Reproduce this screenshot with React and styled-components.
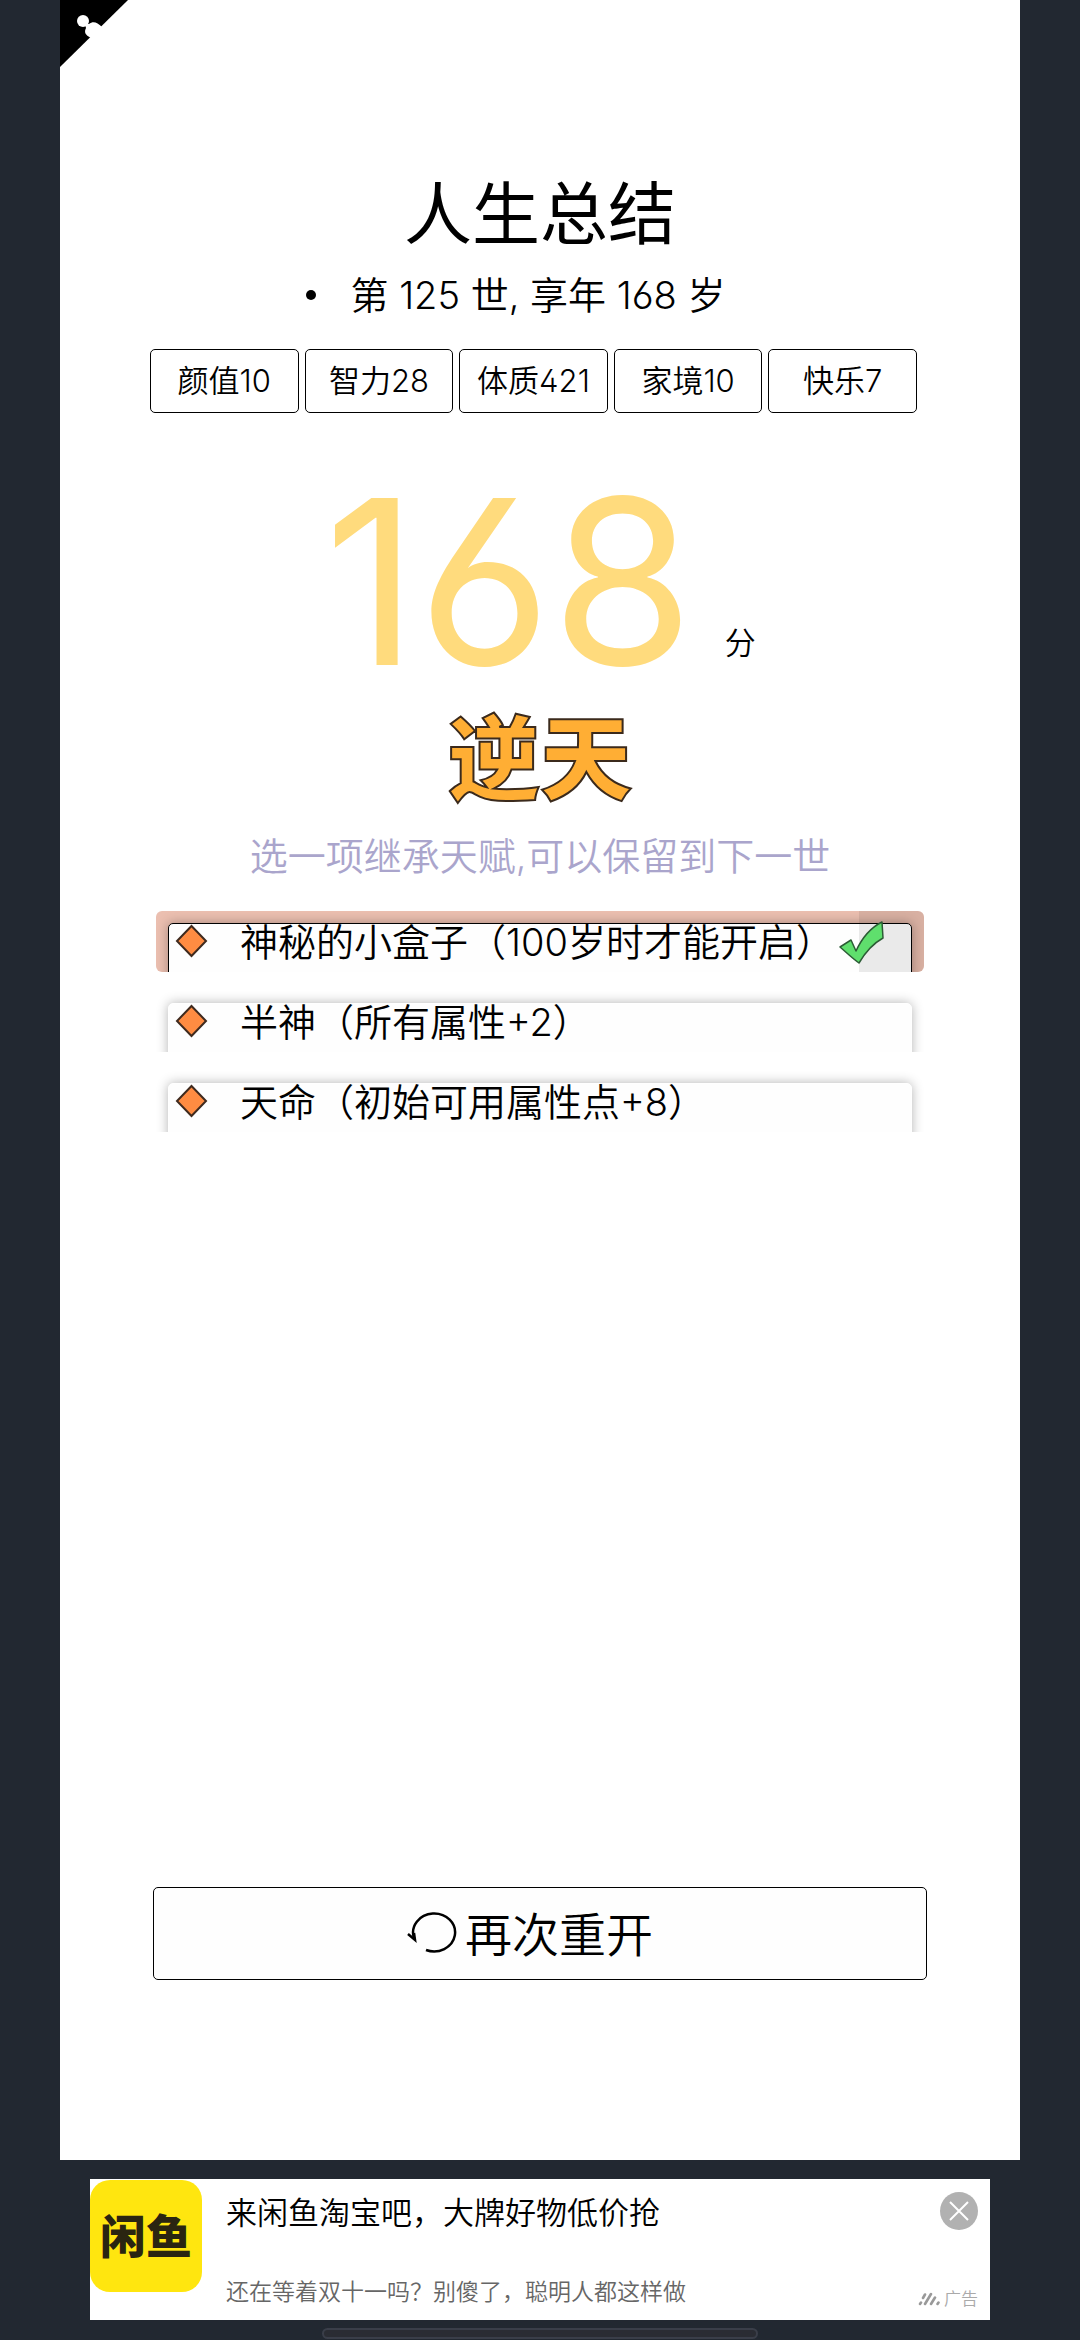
import React, { useState } from 'react';
import styled, { createGlobalStyle } from 'styled-components';

const GlobalStyle = createGlobalStyle`
  * {
    box-sizing: border-box;
  }
  body {
    margin: 0;
    background: #222831;
    font-family: Inter, 'Noto Sans CJK SC', sans-serif;
    font-feature-settings: 'cv03', 'ss01';
    font-weight: 350;
    color: #000;
  }
`;

const Page = styled.div`
  display: flex;
  flex-direction: column;
  align-items: center;
  min-height: 100vh;
  padding: 0 60px 1px;
`;

const Panel = styled.main`
  position: relative;
  flex: 1;
  width: 100%;
  display: flex;
  flex-direction: column;
  padding: 166px 90px 180px;
  background: #fff;
`;

const Corner = styled.a`
  position: absolute;
  top: 0;
  left: 0;
  line-height: 0;
`;

const Title = styled.h1`
  margin: 0;
  font-size: 68px;
  line-height: 96px;
  font-weight: 400;
  text-align: center;
`;

const Summary = styled.ul`
  align-self: center;
  margin: 6px 0 0;
  padding: 0;
  list-style: none;
  font-size: 38px;
  line-height: 54px;
`;

const SummaryItem = styled.li`
  display: flex;
  align-items: center;
  gap: 34px;
  margin-right: 48px;
  &::before {
    content: '';
    width: 10px;
    height: 10px;
    border-radius: 50%;
    background: #000;
  }
`;

const Stats = styled.div`
  display: flex;
  gap: 6px;
  margin: 27px 13px 0 0;
`;

const Stat = styled.div`
  flex: 1;
  height: 64px;
  border: 1px solid #000;
  border-radius: 5px;
  font-size: 31px;
  line-height: 62px;
  text-align: center;
`;

const Score = styled.div`
  display: flex;
  justify-content: center;
  align-items: flex-end;
  gap: 31px;
  margin-top: 63px;
`;

const Points = styled.strong`
  font-size: 230px;
  line-height: 210px;
  font-weight: 400;
  color: #ffdb7d;
`;

const Unit = styled.span`
  margin-bottom: 20px;
  font-size: 31px;
  line-height: 46px;
`;

const Grade = styled.p`
  margin: 24px 0 0;
  font-size: 92px;
  line-height: 100px;
  font-weight: 900;
  text-align: center;
  color: #ffae34;
  -webkit-text-stroke: 2px #3b2a1c;
`;

const Talents = styled.fieldset`
  display: flex;
  flex-direction: column;
  gap: 19px;
  margin: 18px 6px 0;
  padding: 0;
  border: none;
`;

const Hint = styled.legend`
  width: 100%;
  margin: 44px 0 27px;
  padding: 0;
  font-size: 38px;
  line-height: 56px;
  text-align: center;
  white-space: nowrap;
  color: #aaa5cc;
`;

const Talent = styled.label`
  position: relative;
  height: 61px;
  padding: 12px 12px 0;
  border-radius: ${({ $picked }) => ($picked ? '6px' : '0')};
  background: ${({ $picked }) => ($picked ? '#ebbfb0' : '#fff')};
  overflow: hidden;
  cursor: pointer;
`;

const Radio = styled.input`
  position: absolute;
  opacity: 0;
  margin: 0;
`;

const Card = styled.span`
  display: flex;
  align-items: flex-start;
  gap: 32px;
  height: 60px;
  padding: 0 6px;
  border: 1px solid ${({ $picked }) => ($picked ? '#000' : '#fff')};
  border-radius: 5px;
  background: #fefefe;
  box-shadow: 0 0 12px rgba(0, 0, 0, 0.3);
  font-size: 38px;
  line-height: 36px;
  white-space: nowrap;
`;

const Picked = styled.span`
  position: absolute;
  top: 0;
  right: 0;
  width: 65px;
  height: 100%;
  background: rgba(0, 0, 0, 0.08);
  svg {
    position: absolute;
    top: 9px;
    right: 40px;
  }
`;

const Restart = styled.button`
  display: flex;
  justify-content: center;
  align-items: center;
  gap: 8px;
  height: 93px;
  margin: auto 3px 0;
  padding: 0 20px 4px 0;
  border: 1px solid #000;
  border-radius: 5px;
  background: #fefefe;
  font: inherit;
  font-size: 47px;
  color: #000;
  cursor: pointer;
`;

const Ad = styled.aside`
  display: flex;
  align-self: stretch;
  height: 141px;
  margin: 19px 30px 8px;
  background: #fff;
`;

const AdLogo = styled.div`
  width: 112px;
  height: 112px;
  margin-top: 1px;
  border-radius: 20px;
  background: #ffe60f;
  font-size: 46px;
  line-height: 112px;
  font-weight: 900;
  text-align: center;
  color: #2a2511;
`;

const AdText = styled.div`
  flex: 1;
  display: flex;
  flex-direction: column;
  justify-content: space-between;
  padding: 11px 0 10px 24px;
`;

const AdTitle = styled.div`
  font-size: 31px;
  line-height: 46px;
`;

const AdBody = styled.div`
  font-size: 23px;
  line-height: 36px;
  color: #666;
`;

const AdSide = styled.div`
  display: flex;
  flex-direction: column;
  justify-content: space-between;
  align-items: flex-end;
  padding: 13px 12px 9px 0;
`;

const Close = styled.button`
  width: 38px;
  height: 38px;
  padding: 0;
  border: none;
  border-radius: 50%;
  background: #b1b1b1;
  line-height: 0;
  cursor: pointer;
`;

const AdTag = styled.div`
  display: flex;
  align-items: center;
  gap: 4px;
  font-size: 17px;
  line-height: 24px;
  color: #aaa;
`;

const HomeBar = styled.div`
  width: 436px;
  height: 11px;
  border: 2px solid #3a3e49;
  border-radius: 6px;
  background: #2a2c33;
`;

const CornerIcon = () => (
  <svg width="68" height="68" viewBox="0 0 68 68">
    <path d="M0 0H68L0 67Z" fill="#000" />
    <circle cx="23" cy="21" r="6" fill="#fff" />
    <path d="M25 24L29 24C33 21 37 22 42 27L31 38C25 35 24 32 26 28Z" fill="#fff" />
  </svg>
);

const Diamond = () => (
  <svg width="33" height="34" viewBox="0 0 33 34">
    <path d="M16.5 2L31 17L16.5 32L2 17Z" fill="#ff8c42" stroke="#3f2a1e" strokeWidth="2" />
  </svg>
);

const Check = () => (
  <svg width="46" height="46" viewBox="0 0 46 46">
    <path
      d="M2 27L13 20L18 31C24 18 32 8 44 2L45 18C36 23 28 31 21 43C14 38 9 33 2 27Z"
      fill="#5fdf6d"
      stroke="#2c5c35"
      strokeWidth="1.5"
      strokeLinejoin="round"
    />
  </svg>
);

const RestartIcon = () => (
  <svg width="50" height="44" viewBox="0 0 50 44" fill="none" stroke="#000">
    <path d="M7 28A21 19 0 1 1 19 40" strokeWidth="2.5" />
    <path d="M1 24L8 30L7 23" strokeWidth="2.5" />
  </svg>
);

const CloseIcon = () => (
  <svg width="38" height="38" viewBox="0 0 38 38" stroke="#fff" strokeWidth="2">
    <path d="M10 10L28 28M28 10L10 28" />
  </svg>
);

const AdMark = () => (
  <svg width="22" height="14" viewBox="0 0 22 14" stroke="#999" strokeWidth="2.6" strokeLinecap="round">
    <path d="M2 12L3 10.5M5 6L7 2.5M7 12L13 2M13 12L17 5.5M19.5 12L20.5 10.5" />
  </svg>
);

const stats = ['颜值10', '智力28', '体质421', '家境10', '快乐7'];

const talents = [
  '神秘的小盒子（100岁时才能开启）',
  '半神（所有属性+2）',
  '天命（初始可用属性点+8）',
];

const App = () => {
  const [picked, setPicked] = useState(0);

  return (
    <Page>
      <GlobalStyle />
      <Panel>
        <Corner href="#" aria-label="source"><CornerIcon /></Corner>
        <Title>人生总结</Title>
        <Summary>
          <SummaryItem>第 125 世, 享年 168 岁</SummaryItem>
        </Summary>
        <Stats>
          {stats.map((stat) => <Stat key={stat}>{stat}</Stat>)}
        </Stats>
        <Score>
          <Points>168</Points>
          <Unit>分</Unit>
        </Score>
        <Grade>逆天</Grade>
        <Talents>
          <Hint>选一项继承天赋,可以保留到下一世</Hint>
          {talents.map((talent, i) => (
            <Talent key={talent} $picked={picked === i}>
              <Radio type="radio" name="talent" checked={picked === i} onChange={() => setPicked(i)} />
              <Card $picked={picked === i}>
                <Diamond />
                {talent}
              </Card>
              {picked === i && <Picked><Check /></Picked>}
            </Talent>
          ))}
        </Talents>
        <Restart type="button">
          <RestartIcon />
          再次重开
        </Restart>
      </Panel>
      <Ad>
        <AdLogo>闲鱼</AdLogo>
        <AdText>
          <AdTitle>来闲鱼淘宝吧，大牌好物低价抢</AdTitle>
          <AdBody>还在等着双十一吗？别傻了，聪明人都这样做</AdBody>
        </AdText>
        <AdSide>
          <Close type="button" aria-label="关闭"><CloseIcon /></Close>
          <AdTag><AdMark />广告</AdTag>
        </AdSide>
      </Ad>
      <HomeBar />
    </Page>
  );
};

export default App;
